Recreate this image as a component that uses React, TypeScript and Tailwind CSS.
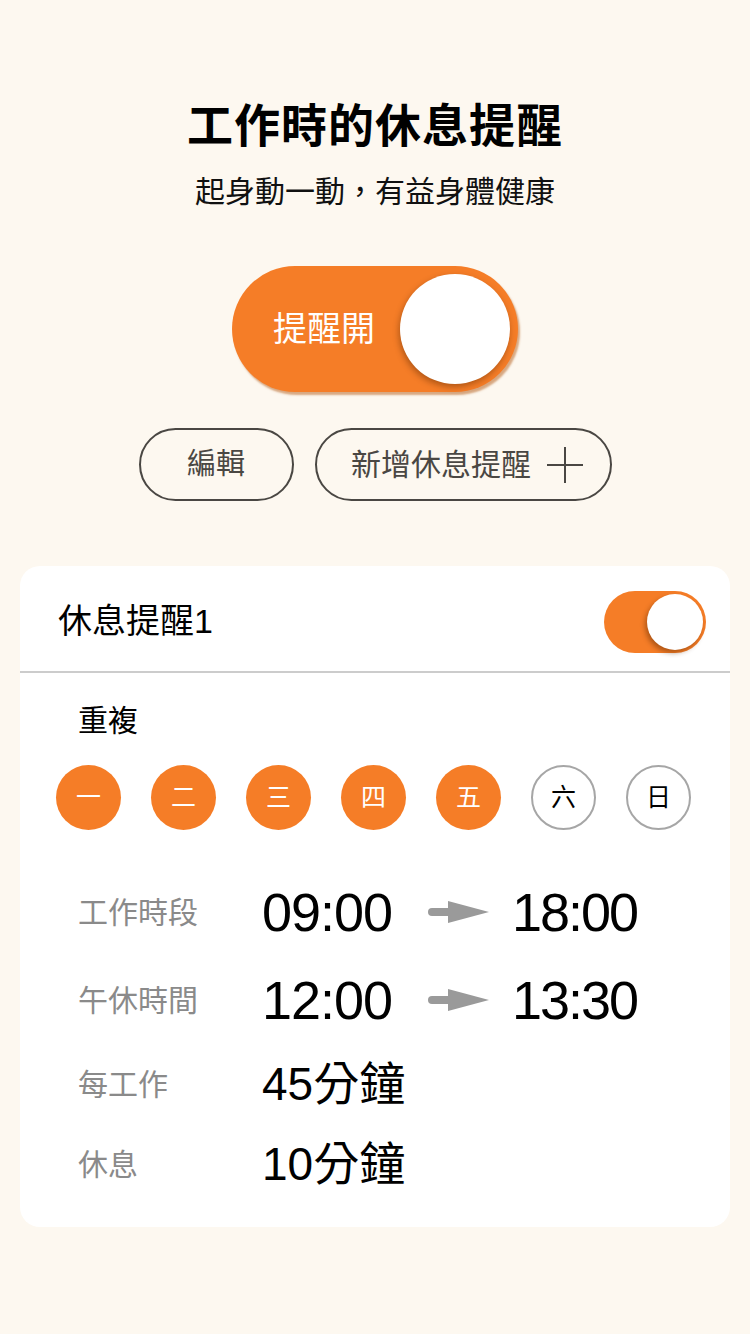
import React from "react"

const FONT = '"Liberation Sans", "Noto Sans CJK TC", sans-serif'

function Arrow() {
  return (
    <svg width="62" height="24" viewBox="0 0 62 24" className="shrink-0">
      <rect x="0" y="8" width="24" height="8" rx="4" fill="#9a9a9a" />
      <polygon points="20,1 61,12 20,23" fill="#9a9a9a" />
    </svg>
  )
}

const days = [
  { label: "一", on: true },
  { label: "二", on: true },
  { label: "三", on: true },
  { label: "四", on: true },
  { label: "五", on: true },
  { label: "六", on: false },
  { label: "日", on: false },
]

function TimeRow({ label, from, to }: { label: string; from: string; to?: string }) {
  return (
    <div className="flex h-[80px] items-center">
      <div className="w-[184px] shrink-0 text-[30px] text-[#8a8a8a]">{label}</div>
      {to ? (
        <div className="flex items-center">
          <span className="w-[166px] text-[54px] leading-none tracking-[-1px] text-black">{from}</span>
          <Arrow />
          <span className="ml-[22px] text-[54px] leading-none tracking-[-2px] text-black">{to}</span>
        </div>
      ) : (
        <span className="text-[46px] leading-none text-black">{from}</span>
      )}
    </div>
  )
}

export default function App() {
  return (
    <div className="min-h-[1334px] w-[750px] bg-[#fdf8f0]" style={{ fontFamily: FONT }}>
      <div className="flex flex-col items-center pt-[96px]">
        <h1 className="text-[46px] font-bold leading-[60px] tracking-[1px] text-black">工作時的休息提醒</h1>
        <p className="mt-[16px] text-[30px] leading-[40px] text-[#111]">起身動一動，有益身體健康</p>

        {/* main toggle */}
        <div className="mt-[54px] flex h-[126px] w-[286px] items-center rounded-full bg-[#f57d27] pl-[41px] pr-[8px] shadow-[2px_3px_2px_rgba(180,90,20,0.5)]">
          <span className="text-[34px] text-white">提醒開</span>
          <div className="ml-auto h-[110px] w-[110px] rounded-full bg-white shadow-[-1px_3px_6px_rgba(90,40,0,0.45)]" />
        </div>

        <div className="mt-[36px] flex gap-[21px]">
          <button className="flex h-[73px] w-[155px] items-center justify-center rounded-full border-2 border-[#4a4743] text-[29px] text-[#4a4743]">
            編輯
          </button>
          <button className="flex h-[73px] w-[297px] items-center justify-center gap-[16px] rounded-full border-2 border-[#4a4743] pl-[8px] text-[30px] text-[#4a4743]">
            <span>新增休息提醒</span>
            <svg width="36" height="36" viewBox="0 0 36 36">
              <path d="M0 18H36M18 0V36" stroke="#4a4743" strokeWidth="2" />
            </svg>
          </button>
        </div>
      </div>

      {/* card */}
      <div className="mx-[20px] mt-[65px] rounded-[20px] bg-white pb-[23px]">
        <div className="flex h-[107px] items-center justify-between border-b-2 border-[#cccccc] pl-[38px] pr-[24px] pt-[6px]">
          <span className="text-[34px] text-black">休息提醒1</span>
          <div className="flex h-[62px] w-[102px] items-center justify-end rounded-full bg-[#f57d27] pr-[3px]">
            <div className="h-[56px] w-[56px] rounded-full bg-white shadow-[-2px_3px_5px_rgba(90,40,0,0.45)]" />
          </div>
        </div>

        <div className="px-[36px] pt-[28px]">
          <div className="pl-[22px] text-[30px] leading-[40px] text-black">重複</div>
          <div className="mt-[24px] flex gap-[30px]">
            {days.map((d) => (
              <div
                key={d.label}
                className={
                  d.on
                    ? "flex h-[65px] w-[65px] items-center justify-center rounded-full bg-[#f57d27] text-[25px] text-white"
                    : "flex h-[65px] w-[65px] items-center justify-center rounded-full border-2 border-[#a6a6a6] text-[25px] text-black"
                }
              >
                {d.label}
              </div>
            ))}
          </div>

          <div className="mt-[42px] pl-[22px]">
            <TimeRow label="工作時段" from="09:00" to="18:00" />
            <div className="h-[8px]" />
            <TimeRow label="午休時間" from="12:00" to="13:30" />
            <div className="h-[4px]" />
            <TimeRow label="每工作" from="45分鐘" />
            <TimeRow label="休息" from="10分鐘" />
          </div>
        </div>
      </div>
    </div>
  )
}
